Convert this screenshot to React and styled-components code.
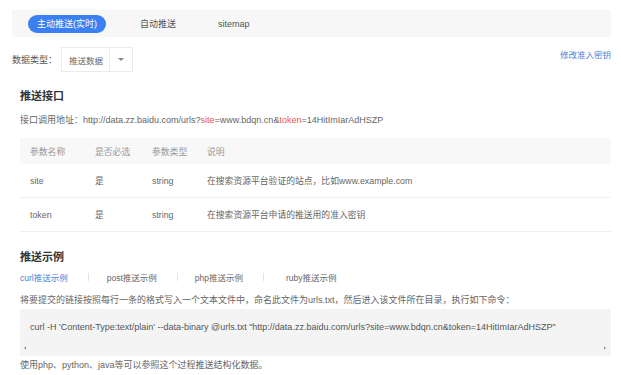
import React from "react";
import styled, { createGlobalStyle } from "styled-components";

const Global = createGlobalStyle`
  html, body { margin: 0; padding: 0; background: #fff; }
  body { font-family: "Liberation Sans", "Noto Sans CJK SC", sans-serif; color: #666; }
`;

const Page = styled.div`
  width: 621px;
  height: 375px;
  padding: 10px 10px 0 12px;
  box-sizing: border-box;
  overflow: hidden;
`;

const TabBar = styled.div`
  display: flex;
  align-items: center;
  height: 27px;
  background: #f7f7f7;
  padding-left: 16px;
`;

const Tab = styled.div`
  font-size: 9px;
  height: 18px;
  line-height: 18px;
  padding: 0 9px;
  border-radius: 9px;
  color: ${p => (p.$active ? "#fff" : "#555")};
  background: ${p => (p.$active ? "#3a80f2" : "transparent")};
  margin-right: ${p => p.$gap || 0}px;
`;

const FilterRow = styled.div`
  display: flex;
  align-items: center;
  margin-top: 10px;
  height: 25px;
`;

const Label = styled.span`
  font-size: 9px;
  color: #555;
  width: 49px;
`;

const Select = styled.div`
  display: flex;
  align-items: stretch;
  height: 25px;
  border: 1px solid #ebebeb;
  box-sizing: border-box;
  width: 72px;
`;

const SelectValue = styled.div`
  font-size: 8.5px;
  color: #666;
  padding-left: 7px;
  width: 48px;
  display: flex;
  align-items: center;
  border-right: 1px solid #ebebeb;
  box-sizing: border-box;
`;

const SelectArrow = styled.div`
  flex: 1;
  display: flex;
  align-items: center;
  justify-content: center;
  &::after {
    content: "";
    border-left: 3px solid transparent;
    border-right: 3px solid transparent;
    border-top: 3px solid #888;
  }
`;

const Link = styled.a`
  margin-left: auto;
  font-size: 8.5px;
  color: #4a7fd8;
  text-decoration: none;
  align-self: flex-start;
  margin-top: 1px;
`;

const Section = styled.div`
  padding-left: 8px;
`;

const Heading = styled.h3`
  margin: 0;
  font-size: 11px;
  font-weight: bold;
  color: #333;
  font-family: "Noto Sans CJK SC", sans-serif;
  margin-top: ${p => p.$top}px;
  line-height: 14px;
`;

const Text = styled.p`
  margin: 0;
  font-size: 9px;
  color: #666;
  line-height: 12px;
  margin-top: ${p => p.$top}px;
`;

const Red = styled.span`
  color: #f0554a;
`;

const Table = styled.div`
  margin-top: 12px;
  display: grid;
  grid-template-columns: 75px 57px 55px 1fr;
  font-size: 8.8px;
`;

const HeadCell = styled.div`
  background: #f8f8f8;
  height: 26px;
  display: flex;
  align-items: center;
  color: #999;
  &:first-child { padding-left: 10px; }
`;

const Cell = styled.div`
  height: 34px;
  display: flex;
  align-items: center;
  color: #666;
  border-bottom: 1px solid #f0f0f0;
  box-sizing: border-box;
  padding-left: ${p => (p.$first ? 10 : 0)}px;
`;

const SubTabs = styled.div`
  display: flex;
  align-items: center;
  margin-top: 8px;
  font-size: 8.5px;
  height: 12px;
`;

const SubTab = styled.span`
  color: ${p => (p.$active ? "#4a7fd8" : "#666")};
`;

const Sep = styled.span`
  width: 1px;
  height: 8px;
  background: #e3e3e3;
  margin: 0 ${p => p.$l}px 0 ${p => p.$r}px;
`;

const CodeBlock = styled.div`
  margin-top: 3px;
  background: #f4f4f4;
  height: 47px;
  position: relative;
  box-sizing: border-box;
  padding: 12px 0 0 10px;
  font-size: 9px;
  line-height: 12px;
  color: #555;
  white-space: nowrap;
`;

const ScrollArrow = styled.span`
  position: absolute;
  bottom: 6px;
  ${p => (p.$right ? "right: 5px;" : "left: 4px;")}
  width: 0;
  height: 0;
  border-top: 2px solid transparent;
  border-bottom: 2px solid transparent;
  ${p => (p.$right ? "border-left: 2px solid #999;" : "border-right: 2px solid #999;")}
`;

const params = [
  ["site", "是", "string", "在搜索资源平台验证的站点，比如www.example.com"],
  ["token", "是", "string", "在搜索资源平台申请的推送用的准入密钥"],
];

export default function App() {
  return (
    <>
      <Global />
      <Page>
        <TabBar>
          <Tab $active $gap={25}>主动推送(实时)</Tab>
          <Tab $gap={24}>自动推送</Tab>
          <Tab>sitemap</Tab>
        </TabBar>
        <FilterRow>
          <Label>数据类型：</Label>
          <Select>
            <SelectValue>推送数据</SelectValue>
            <SelectArrow />
          </Select>
          <Link>修改准入密钥</Link>
        </FilterRow>
        <Section>
          <Heading $top={16}>推送接口</Heading>
          <Text $top={12}>
            接口调用地址：http://data.zz.baidu.com/urls?<Red>site</Red>=www.bdqn.cn&amp;<Red>token</Red>=14HitImIarAdHSZP
          </Text>
          <Table>
            <HeadCell>参数名称</HeadCell>
            <HeadCell>是否必选</HeadCell>
            <HeadCell>参数类型</HeadCell>
            <HeadCell>说明</HeadCell>
            {params.map(row =>
              row.map((c, i) => (
                <Cell key={row[0] + i} $first={i === 0}>{c}</Cell>
              ))
            )}
          </Table>
          <Heading $top={17}>推送示例</Heading>
          <SubTabs>
            <SubTab $active>curl推送示例</SubTab>
            <Sep $r={20} $l={18} />
            <SubTab>post推送示例</SubTab>
            <Sep $r={20} $l={17} />
            <SubTab>php推送示例</SubTab>
            <Sep $r={20} $l={22} />
            <SubTab>ruby推送示例</SubTab>
          </SubTabs>
          <Text $top={11}>
            将要提交的链接按照每行一条的格式写入一个文本文件中，命名此文件为urls.txt，然后进入该文件所在目录，执行如下命令：
          </Text>
          <CodeBlock>
            curl -H 'Content-Type:text/plain' --data-binary @urls.txt "http://data.zz.baidu.com/urls?site=www.bdqn.cn&amp;token=14HitImIarAdHSZP"
            <ScrollArrow />
            <ScrollArrow $right />
          </CodeBlock>
          <Text $top={3}>使用php、python、java等可以参照这个过程推送结构化数据。</Text>
        </Section>
      </Page>
    </>
  );
}
